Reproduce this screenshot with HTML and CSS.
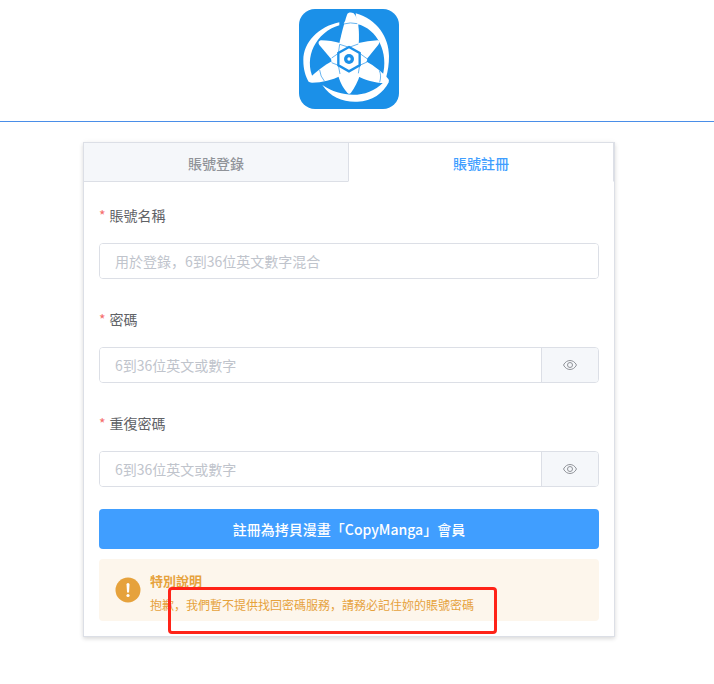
FILE: index.html
```html
<!DOCTYPE html>
<html lang="zh-CN">
<head>
    <meta charset="UTF-8">
    <meta name="viewport" content="width=device-width, initial-scale=1.0">
    <title>賬號註冊</title>
    <link rel="stylesheet" href="styles.css">
</head>
<body>
    <header class="header">
        <a href="#" class="logo" aria-label="CopyManga">
            <svg viewBox="30 27 300 300" width="100" height="100">
                <rect x="30" y="27" width="300" height="300" rx="48" fill="#1b90e8"/>
                <g fill="#fff">
                    <path d="M151 67C88 80 43 128 43 180C43 208 49 228 60 247L74 238C42 172 82 96 151 76Z"/>
                    <path d="M200 40C264 58 300 112 300 168C300 192 297 212 291 234L281 228C300 160 266 86 204 72Z"/>
                    <path d="M164 72L168 64C180 62 194 62 208 66L208 74C192 70 178 70 164 72Z"/>
                    <path d="M100 255C124 292 164 307 205 305C250 303 282 280 300 245L282 248C238 294 160 296 100 255Z"/>
                    <path d="M150 135C158 96 168 62 174 44C178 36 187 37 194 40C208 52 212 92 209 135L180 145Z"/>
                    <path d="M205 130L236 124L266 121C273 122 272 130 268 134L231 180Z"/>
                    <path d="M229 183C258 198 284 220 298 237C303 245 297 249 288 249C260 250 230 240 203 227Z"/>
                    <path d="M146 221L180 208L214 221C207 245 196 264 186 278C181 284 177 282 173 276C160 260 152 244 146 221Z"/>
                    <path d="M131 182L156 227C128 240 101 247 69 248C58 248 57 241 64 232C82 214 104 197 131 182Z"/>
                    <path d="M155 130L129 180L91 135C87 129 88 123 96 121C116 121 136 125 155 130Z"/>
                    <path d="M152 129L208 130L235 180L208 226L152 226L126 180Z"/>
                </g>
                <g fill="none" stroke="#1b90e8">
                    <path d="M180 141L212 159V196L180 214L148 196V159Z" stroke-width="7"/>
                    <path d="M152 133L180 142L208 132M212 160L234 176M234 186L212 196L208 220M153 222L148 196L128 188M128 174L148 160L152 133" stroke-width="2"/>
                    <path d="M164 72Q184 66 205 71M271 212Q278 226 272 247M92 210Q94 230 106 243" stroke-width="2"/>
                </g>
                <circle cx="180" cy="177" r="15" fill="#1b90e8"/>
                <circle cx="180" cy="177" r="5" fill="#fff"/>
            </svg>
        </a>
    </header>

    <main class="main">
        <div class="card">
            <nav class="tabs">
                <button type="button" class="tab">賬號登錄</button>
                <button type="button" class="tab active">賬號註冊</button>
            </nav>
            <form class="form">
                <div class="field">
                    <label for="username">賬號名稱</label>
                    <div class="input-group">
                        <input type="text" id="username" placeholder="用於登錄，6到36位英文數字混合">
                    </div>
                </div>
                <div class="field">
                    <label for="password">密碼</label>
                    <div class="input-group">
                        <input type="password" id="password" placeholder="6到36位英文或數字">
                        <button type="button" class="toggle" aria-label="顯示密碼">
                            <svg viewBox="0 0 14 14" width="14" height="14" fill="none" stroke="#909399">
                                <path d="M.5 7C3.5 1 10.500 1 13.500 7C10.500 13 3.500 13 .5 7Z"/>
                                <circle cx="7" cy="7" r="2.500"/>
                            </svg>
                        </button>
                    </div>
                </div>
                <div class="field">
                    <label for="confirm">重復密碼</label>
                    <div class="input-group">
                        <input type="password" id="confirm" placeholder="6到36位英文或數字">
                        <button type="button" class="toggle" aria-label="顯示密碼">
                            <svg viewBox="0 0 14 14" width="14" height="14" fill="none" stroke="#909399">
                                <path d="M.5 7C3.5 1 10.500 1 13.500 7C10.500 13 3.500 13 .5 7Z"/>
                                <circle cx="7" cy="7" r="2.500"/>
                            </svg>
                        </button>
                    </div>
                </div>
                <button type="submit" class="submit">註冊為拷貝漫畫「CopyManga」會員</button>
                <div class="alert">
                    <svg class="alert-icon" viewBox="0 0 26 26" width="26" height="26">
                        <circle cx="13" cy="13" r="12.500" fill="#e6a23c"/>
                        <path d="M11.500 7.500a1.500 1.500 0 0 1 3 0L14 15.500h-2Z" fill="#fff"/>
                        <circle cx="13" cy="18.500" r="1.600" fill="#fff"/>
                    </svg>
                    <div>
                        <strong class="alert-title">特別說明</strong>
                        <p class="alert-text">抱歉，我們暫不提供找回密碼服務，請務必記住妳的賬號密碼</p>
                    </div>
                    <span class="highlight"></span>
                </div>
            </form>
        </div>
    </main>
</body>
</html>
```
FILE: styles.css
```css
* {
    box-sizing: border-box;
}
body {
    margin: 0;
    font-family: "Noto Sans CJK SC", sans-serif;
    font-size: 14px;
    color: #606266;
    background-color: #fff;
}
button,
input {
    font-family: inherit;
    font-size: 14px;
}
.header {
    display: flex;
    justify-content: center;
    padding: 9px 16px 12px 0;
    border-bottom: 1px solid #4a8ee8;
}
.logo svg {
    display: block;
}
.main {
    padding: 20px 16px 20px 0;
}
.card {
    max-width: 532px;
    margin: 0 auto;
    border: 1px solid #dcdfe6;
    box-shadow: 0 2px 4px rgba(0,0,0,0.12), 0 0 6px rgba(0,0,0,0.04);
}
.tabs {
    display: flex;
    background-color: #f5f7fa;
}
.tab {
    flex: 1;
    height: 39px;
    padding: 2px 0 0;
    border: 0;
    border-bottom: 1px solid #dcdfe6;
    background: none;
    color: #909399;
    font-weight: 500;
}
.tab.active {
    border-left: 1px solid #dcdfe6;
    border-right: 1px solid #dcdfe6;
    border-bottom-color: #fff;
    background-color: #fff;
    color: #409eff;
}
.form {
    padding: 15px;
}
.field {
    margin-bottom: 22px;
}
.field label {
    display: block;
    line-height: 36px;
    padding-bottom: 10px;
}
.field label::before {
    content: "*";
    margin-right: 4px;
    color: #f56c6c;
}
.input-group {
    display: flex;
    height: 36px;
    border: 1px solid #dcdfe6;
    border-radius: 4px;
    overflow: hidden;
}
.input-group input {
    flex: 1;
    min-width: 0;
    padding: 0 15px;
    border: 0;
    outline: none;
    color: #606266;
}
.input-group input::placeholder {
    color: #c0c4cc;
}
.toggle {
    display: flex;
    align-items: center;
    justify-content: center;
    width: 57px;
    padding: 0;
    border: 0;
    border-left: 1px solid #dcdfe6;
    background-color: #f5f7fa;
}
.submit {
    display: block;
    width: 100%;
    height: 40px;
    margin-bottom: 10px;
    border: 0;
    border-radius: 4px;
    background-color: #409eff;
    color: #fff;
    font-weight: 500;
}
.alert {
    position: relative;
    display: flex;
    align-items: center;
    gap: 9px;
    padding: 10px 16px 4px;
    border-radius: 4px;
    background-color: #fdf6ec;
    color: #e6a23c;
}
.alert-icon {
    flex: none;
    margin-bottom: 6px;
}
.alert-title {
    display: block;
    font-size: 13px;
    line-height: 24px;
}
.alert-text {
    margin: 0;
    font-size: 12px;
    line-height: 24px;
}
/* red frame drawn over the notice */
.highlight {
    position: absolute;
    top: 28px;
    left: 69px;
    width: 329px;
    height: 47px;
    border: 3px solid #ff2318;
    border-radius: 4px;
}
```
